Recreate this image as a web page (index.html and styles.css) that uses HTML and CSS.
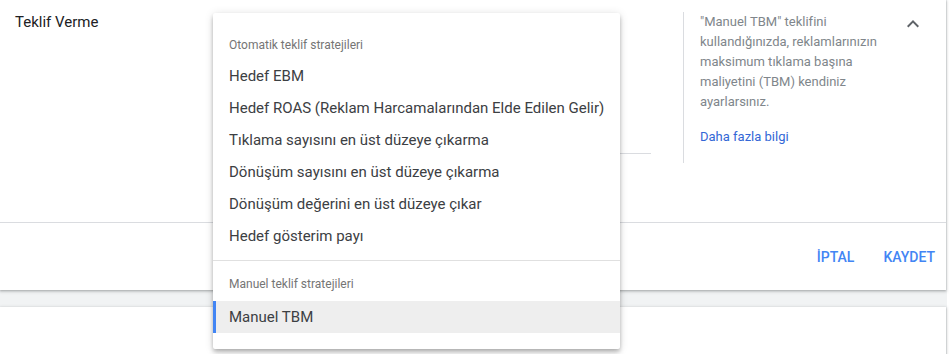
FILE: index.html
```html
<!DOCTYPE html>
<html lang="tr">
<head>
<meta charset="utf-8">
<title>Teklif Verme</title>
<link rel="stylesheet" href="styles.css">
</head>
<body>
<div class="page">
  <section class="card card-edit">
    <div class="edit-body">
      <div class="title">Teklif Verme</div>
      <div class="field"></div>
      <div class="help">
        <p class="help-text">"Manuel TBM" teklifini kullandığınızda, reklamlarınızın maksimum tıklama başına maliyetini (TBM) kendiniz ayarlarsınız.</p>
        <a class="help-link" href="#">Daha fazla bilgi</a>
      </div>
      <div class="chevron">
        <svg width="24" height="24" viewBox="0 0 24 24"><path d="M12 8l-6 6 1.41 1.41L12 10.83l4.59 4.58L18 14z" fill="#5f6368"/></svg>
      </div>
    </div>
    <div class="actions">
      <button class="btn btn-cancel">İPTAL</button>
      <button class="btn">KAYDET</button>
    </div>

    <div class="menu">
      <div class="group group-first">
        <div class="group-header">Otomatik teklif stratejileri</div>
        <div class="item">Hedef EBM</div>
        <div class="item">Hedef ROAS (Reklam Harcamalarından Elde Edilen Gelir)</div>
        <div class="item">Tıklama sayısını en üst düzeye çıkarma</div>
        <div class="item">Dönüşüm sayısını en üst düzeye çıkarma</div>
        <div class="item">Dönüşüm değerini en üst düzeye çıkar</div>
        <div class="item">Hedef gösterim payı</div>
      </div>
      <div class="group group-second">
        <div class="group-header">Manuel teklif stratejileri</div>
        <div class="item item-selected">Manuel TBM</div>
      </div>
    </div>
  </section>
  <section class="card card-next"></section>
</div>
</body>
</html>
```

FILE: styles.css
```css
* { box-sizing: border-box; }
html, body { margin: 0; padding: 0; background: #ffffff; }
body {
  font-family: Roboto, "Noto Sans", "Liberation Sans", sans-serif;
  color: #202124;
  height: 354px;
  overflow: hidden;
}
.page {
  width: 947px;
  height: 354px;
  background: #f1f3f4;
}
.card {
  background: #ffffff;
  width: 946px;
  box-shadow: 0 1px 2px rgba(60,64,67,.3), 0 1px 3px 1px rgba(60,64,67,.15);
}
.card-edit {
  position: relative;
  height: 290px;
}
.edit-body {
  display: flex;
  height: 223px;
  border-bottom: 1px solid #dadce0;
}
.title {
  width: 213px;
  padding: 12px 0 0 15px;
  font-size: 15px;
  line-height: 20px;
  color: #202124;
}
.field {
  width: 438px;
  height: 154px;
  border-bottom: 1px solid #dadce0;
  margin-right: 32px;
}
.help {
  width: 200px;
  height: 151px;
  margin-top: 12px;
  border-left: 1px solid #dadce0;
  padding-left: 16px;
  font-size: 13px;
  line-height: 20px;
}
.help-text {
  margin: 0;
  width: 190px;
  color: #80868b;
}
.help-link {
  display: block;
  margin-top: 15px;
  color: #3367d6;
  text-decoration: none;
}
.chevron {
  margin-left: auto;
  margin-right: 21px;
  margin-top: 12px;
  width: 24px;
  height: 24px;
}
.chevron svg { display: block; }
.actions {
  display: flex;
  justify-content: flex-end;
  align-items: center;
  height: 67px;
  padding-right: 3px;
}
.btn {
  border: 0;
  background: transparent;
  font-family: Roboto, "Noto Sans", "Liberation Sans", sans-serif;
  font-size: 14px;
  font-weight: 500;
  color: #4285f4;
  padding: 0 8px;
  height: 36px;
  letter-spacing: 0;
  cursor: pointer;
}
.btn-cancel { margin-right: 13px; }
.card-next {
  margin-top: 17px;
  height: 60px;
}
.menu {
  position: absolute;
  left: 213px;
  top: 13px;
  width: 407px;
  height: 336px;
  background: #ffffff;
  border-radius: 2px;
  box-shadow: 0 2px 4px -1px rgba(0,0,0,.2), 0 4px 5px 0 rgba(0,0,0,.14), 0 1px 10px 0 rgba(0,0,0,.12);
  padding-top: 8px;
  z-index: 2;
}
.group-first {
  padding-bottom: 8px;
  border-bottom: 1px solid #e0e0e0;
}
.group-header {
  padding: 16px 16px 7px;
  font-size: 12px;
  line-height: 16px;
  color: #757575;
}
.group-second .group-header {
  padding-top: 15px;
  padding-bottom: 9px;
}
.item {
  height: 32px;
  line-height: 32px;
  padding-left: 16px;
  font-size: 15px;
  color: #3c4043;
  white-space: nowrap;
}
.item-selected {
  background: #eeeeee;
  border-left: 3px solid #4285f4;
  padding-left: 13px;
}
```
